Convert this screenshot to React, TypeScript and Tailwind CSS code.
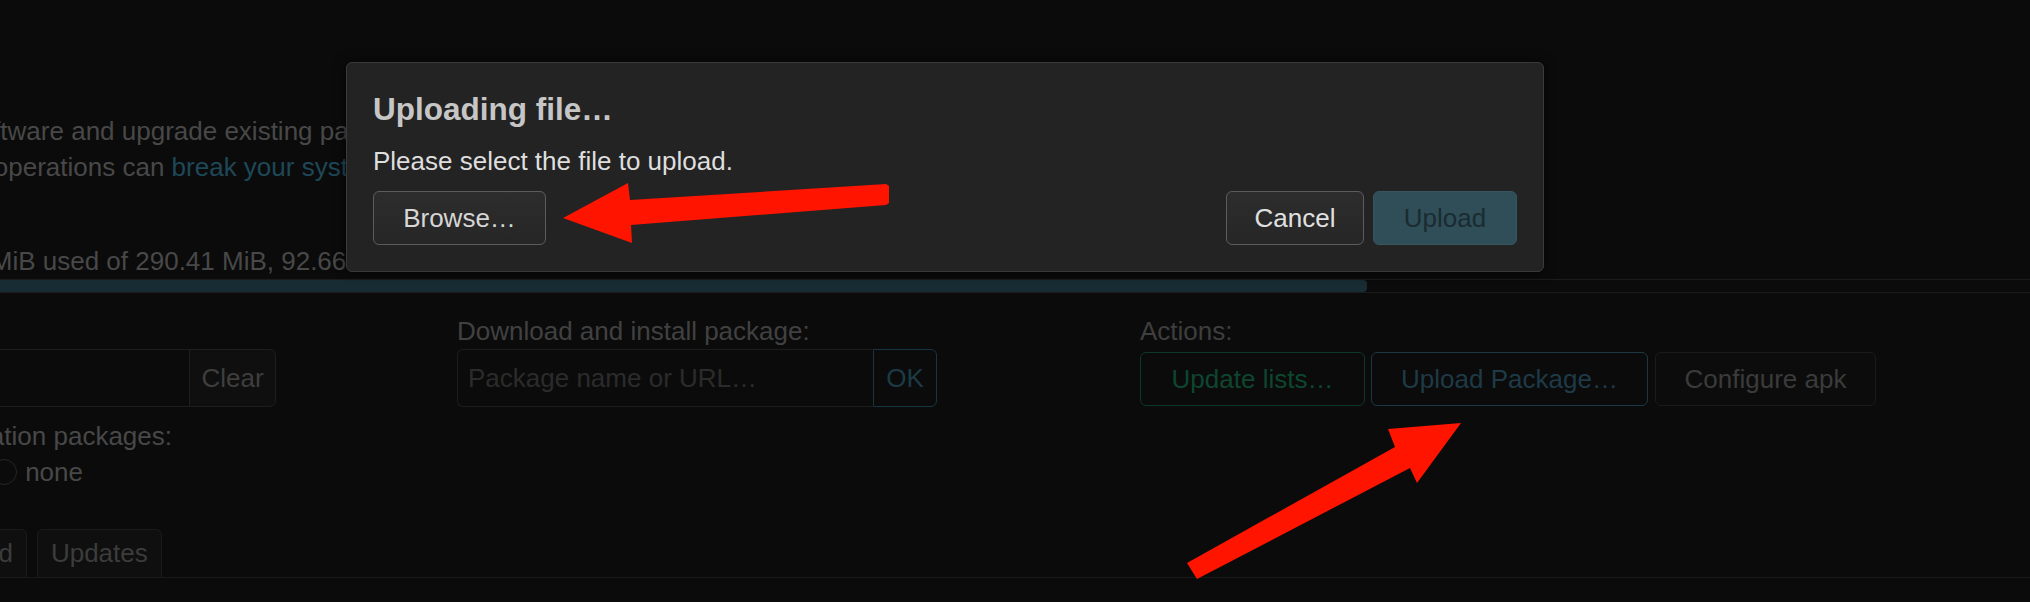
import React from 'react';

// Software page of the router UI, dimmed behind the "Uploading file…" dialog.

const font = "font-['Liberation_Sans','Helvetica_Neue',Arial,sans-serif]";

function Radio({ label }: { label: string }) {
  return (
    <span className="flex items-center gap-[8px]">
      <span className="h-[26px] w-[26px] rounded-full border-[1.5px] border-[#262626] bg-[#0b0b0b]" />
      <span>{label}</span>
    </span>
  );
}

function Tab({ label }: { label: string }) {
  return (
    <div className="h-[48px] rounded-t-[6px] border border-b-0 border-[#1b1b1b] bg-[#0f0f0f] px-[13px] leading-[46px] text-[#3c3c3c]">
      {label}
    </div>
  );
}

function UploadDialog() {
  return (
    <div className="absolute left-[346px] top-[62px] w-[1198px] rounded-[6px] border border-[#3a3a3a] bg-[#232323] px-[26px] pb-[26px] pt-[28px] shadow-[0_0_12px_rgba(0,0,0,0.7)]">
      <h4 className="text-[31.5px] font-bold leading-[37px] text-[#c6c6c6]">Uploading file…</h4>
      <p className="mt-[15px] leading-[36px] text-[#dedede]">Please select the file to upload.</p>
      <div className="mt-[12px] flex items-center">
        <button className="h-[54px] w-[173px] rounded-[6px] border border-[#5c5c5c] bg-gradient-to-b from-[#2d2d2d] to-[#262626] text-[#d6d6d6]">
          Browse…
        </button>
        <div className="ml-auto flex gap-[9px]">
          <button className="h-[54px] w-[138px] rounded-[6px] border border-[#5c5c5c] bg-gradient-to-b from-[#2d2d2d] to-[#262626] text-[#e0e0e0]">
            Cancel
          </button>
          <button className="h-[54px] w-[144px] rounded-[6px] border border-[#36565f] bg-[#2f4e58] text-[#1a2b31]">
            Upload
          </button>
        </div>
      </div>
    </div>
  );
}

function Arrows() {
  return (
    <svg className="pointer-events-none absolute inset-0" width="2030" height="602" viewBox="0 0 2030 602">
      <polygon
        fill="#ff1400"
        points="563,218 628,183 630,200 886,184 889,186 889,203 886,205 631,225 632,243"
      />
      <polygon
        fill="#ff1400"
        points="1461,423 1388,429 1395,447 1187,563 1197,579 1410,468 1417,483"
      />
    </svg>
  );
}

export default function App() {
  return (
    <div
      className={`relative h-[602px] w-[2030px] overflow-hidden bg-[#0b0b0b] text-[26px] leading-[36px] text-[#484848] ${font}`}
    >
      <main className="pt-[113px]">
        <p className="-ml-[228px] whitespace-nowrap">
          Install additional software and upgrade existing packages with apk.
        </p>
        <p className="-ml-[222px] whitespace-nowrap">
          Warning: package operations can <a className="text-[#1e4858]">break your system</a>.
        </p>

        {/* disk usage */}
        <div className="mt-[59px]">
          <div className="-ml-[96px] whitespace-nowrap leading-[35px]">
            197.75 MiB used of 290.41 MiB, 92.66 MiB free
          </div>
          <div className="h-[14px] border-y border-[#1c1c1c]">
            <div className="h-full w-[1367px] rounded-r-[4px] bg-[#172c33]" />
          </div>
        </div>

        {/* filter / download / actions */}
        <div className="mt-[21px] flex items-start">
          <div className="-ml-[200px] w-[476px]">
            <label className="block leading-[35px] text-[#414141]">Filter:</label>
            <div className="flex h-[58px]">
              <input
                className="min-w-0 flex-1 rounded-l-[6px] border border-r-0 border-[#1d1d1d] bg-transparent px-[10px] outline-none placeholder:text-[#2b2b2b]"
                placeholder="Type to filter…"
              />
              <button className="w-[87px] rounded-r-[6px] border border-[#1e1e1e] bg-[#0f0f0f] text-[#3e3e3e]">
                Clear
              </button>
            </div>
          </div>

          <div className="ml-[181px] w-[480px]">
            <label className="block whitespace-nowrap leading-[35px] text-[#414141]">
              Download and install package:
            </label>
            <div className="flex h-[58px]">
              <input
                className="w-[416px] rounded-l-[6px] border border-r-0 border-[#1c1c1c] bg-transparent px-[10px] outline-none placeholder:text-[#2b2b2b]"
                placeholder="Package name or URL…"
              />
              <button className="w-[64px] rounded-r-[6px] border border-[#163540] text-[#1c3b46]">OK</button>
            </div>
          </div>

          <div className="ml-[203px]">
            <label className="block leading-[35px] text-[#3e3e3e]">Actions:</label>
            <div className="mt-[3px] flex">
              <button className="h-[54px] w-[225px] rounded-[6px] border border-[#0d3825] text-[#0e4630]">
                Update lists…
              </button>
              <button className="ml-[6px] h-[54px] w-[277px] rounded-[6px] border border-[#1d3743] text-[#1e3a47]">
                Upload Package…
              </button>
              <button className="ml-[7px] h-[54px] w-[221px] rounded-[6px] border border-[#1b1b1b] bg-[#0c0c0c] text-[#3b3b3b]">
                Configure apk
              </button>
            </div>
          </div>
        </div>

        {/* translation packages */}
        <div className="mt-[11px] -ml-[400px] w-[572px] whitespace-nowrap text-right">
          Display LuCI translation packages:
        </div>
        <div className="-ml-[400px] flex h-[36px] w-[483px] items-center justify-end gap-[18px] whitespace-nowrap">
          <Radio label="filtered" />
          <Radio label="all" />
          <Radio label="none" />
        </div>

        {/* package tabs */}
        <div className="mt-[39px] -ml-[241px] flex items-end gap-[10px] border-b border-[#1a1a1a]">
          <Tab label="Available" />
          <Tab label="Installed" />
          <Tab label="Updates" />
        </div>
      </main>

      <UploadDialog />
      <Arrows />
    </div>
  );
}
